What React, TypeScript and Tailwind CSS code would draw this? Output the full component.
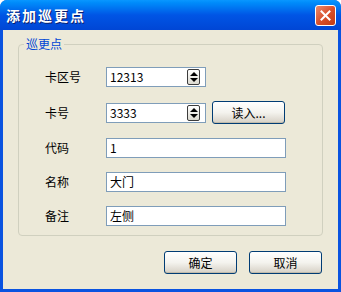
import React from 'react'

const font = { fontFamily: '"Noto Sans CJK SC", "Liberation Sans", sans-serif' }

function Spin() {
  return (
    <div className="flex h-[16px] w-[13px] flex-col items-center justify-center gap-[2px] rounded-[2px] border border-[#3c3c3c] bg-gradient-to-b from-white to-[#dcdad0]">
      <div className="h-0 w-0 border-x-[4px] border-b-[4px] border-x-transparent border-b-black" />
      <div className="h-0 w-0 border-x-[4px] border-t-[4px] border-x-transparent border-t-black" />
    </div>
  )
}

function Field({ value, width, spin }: { value: string; width: string; spin?: boolean }) {
  return (
    <div className={`flex h-[20px] items-center border border-[#7f9db9] bg-white pl-[3px] pr-[5px] ${width}`}>
      <span className="flex-1 text-[12px] leading-none text-black">{value}</span>
      {spin && <Spin />}
    </div>
  )
}

function Btn({ label, width }: { label: string; width: string }) {
  return (
    <button
      type="button"
      className={`flex h-[23px] items-center justify-center rounded-[3px] border border-[#003c74] bg-gradient-to-b from-white via-[#f4f3ee] to-[#d6d0c5] text-[12px] text-black shadow-[inset_0_-1px_0_#c1bbab] ${width}`}
    >
      {label}
    </button>
  )
}

export default function App() {
  const rows: { label: string; value: string; spin?: boolean; read?: boolean }[] = [
    { label: '卡区号', value: '12313', spin: true },
    { label: '卡号', value: '3333', spin: true, read: true },
    { label: '代码', value: '1' },
    { label: '名称', value: '大门' },
    { label: '备注', value: '左侧' },
  ]
  return (
    <div className="h-[292px] w-[341px] overflow-hidden" style={font}>
      <div className="flex h-full flex-col rounded-t-[7px] bg-[#0a53e0]">
        {/* title bar */}
        <div className="flex h-[30px] items-center justify-between rounded-t-[7px] bg-gradient-to-b from-[#0997ff] via-[#0055e5] to-[#0046d5] pl-[6px] pr-[5px]">
          <span className="text-[14px] font-bold tracking-[2px] text-white [text-shadow:1px_1px_0_#0a1e6e]">
            添加巡更点
          </span>
          <div className="flex h-[21px] w-[21px] items-center justify-center rounded-[3px] border border-white bg-gradient-to-br from-[#e98a6d] via-[#d9502b] to-[#c23b12]">
            <svg width="11" height="11" viewBox="0 0 11 11">
              <path d="M1.5 1.5 L9.5 9.5 M9.5 1.5 L1.5 9.5" stroke="white" strokeWidth="2" strokeLinecap="square" />
            </svg>
          </div>
        </div>
        {/* client */}
        <div className="mx-[3px] mb-[3px] flex flex-1 flex-col bg-[#ece9d8] px-[15px] pt-[14px]">
          <div className="relative h-[192px] rounded-[4px] border border-[#d0d0bf]">
            <span className="absolute -top-[9px] left-[5px] bg-[#ece9d8] px-[2px] text-[12px] leading-[16px] text-[#0046d5]">
              巡更点
            </span>
            <div className="flex flex-col gap-[14px] pt-[22px] pl-[26px]">
              {rows.map((r) => (
                <div key={r.label} className="flex items-center">
                  <span className="w-[61px] text-[12px] text-black">{r.label}</span>
                  <Field value={r.value} spin={r.spin} width={r.spin ? 'w-[100px]' : 'w-[180px]'} />
                  {r.read && (
                    <div className="ml-[6px]">
                      <Btn label="读入..." width="w-[73px]" />
                    </div>
                  )}
                </div>
              ))}
            </div>
          </div>
          <div className="mt-[15px] flex justify-end gap-[12px] pr-[1px]">
            <Btn label="确定" width="w-[73px]" />
            <Btn label="取消" width="w-[73px]" />
          </div>
        </div>
      </div>
    </div>
  )
}
